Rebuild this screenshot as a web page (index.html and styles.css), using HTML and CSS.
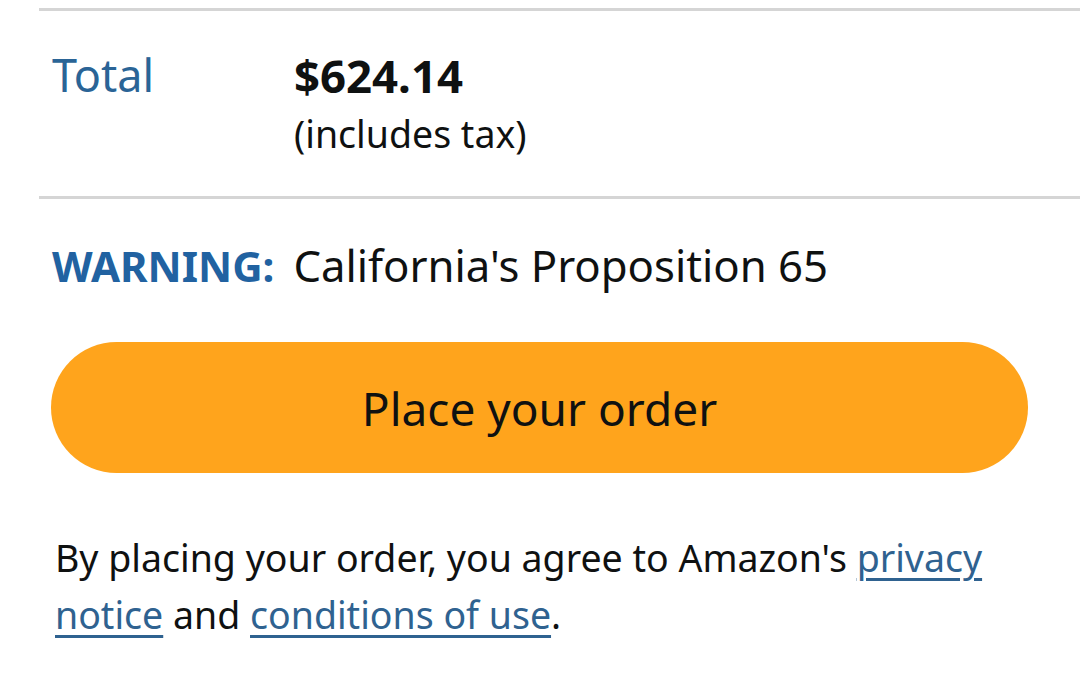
FILE: index.html
```html
<!DOCTYPE html>
<html lang="en">
<head>
<meta charset="utf-8">
<link rel="stylesheet" href="styles.css">
</head>
<body>
<div class="page">
  <div class="divider"></div>
  <div class="total-row">
    <div class="total-label">Total</div>
    <div class="total-value">
      <div class="price">$624.14</div>
      <div class="tax">(includes tax)</div>
    </div>
  </div>
  <div class="divider"></div>
  <div class="warning-row">
    <span class="warning-label">WARNING:</span>
    <span class="warning-text">California's Proposition 65</span>
  </div>
  <div class="button-wrap">
    <button class="place-order">Place your order</button>
  </div>
  <p class="agree">By placing your order, you agree to Amazon's <a href="#">privacy notice</a> and <a href="#">conditions of use</a>.</p>
</div>
</body>
</html>
```
FILE: styles.css
```css
html, body {
  margin: 0;
  padding: 0;
  background: #ffffff;
}
body {
  font-family: "Noto Sans", "Open Sans", sans-serif;
  color: #0f1111;
  width: 1080px;
  height: 698px;
  overflow: hidden;
}
.page {
  padding-top: 8px;
}
.divider {
  margin-left: 39px;
  height: 3px;
  background: #d5d5d5;
}
.total-row {
  display: grid;
  grid-template-columns: 242px 1fr;
  padding-left: 52px;
  padding-top: 35px;
  padding-bottom: 32px;
}
.total-label {
  font-size: 45px;
  line-height: 58px;
  color: #2a6496;
}
.price {
  font-size: 45.5px;
  line-height: 58px;
  font-weight: 700;
  color: #0f1111;
}
.tax {
  font-size: 37.5px;
  line-height: 60px;
  color: #0f1111;
}
.warning-row {
  padding-left: 52px;
  padding-top: 34px;
  line-height: 64px;
  display: flex;
  align-items: baseline;
  gap: 19px;
}
.warning-label {
  font-size: 42px;
  font-weight: 700;
  color: #2162a1;
}
.warning-text {
  font-size: 43.7px;
}
.button-wrap {
  padding: 44px 52px 0 51px;
}
.place-order {
  display: block;
  width: 977px;
  height: 131px;
  border: none;
  border-radius: 66px;
  background: #ffa41c;
  font-family: inherit;
  font-size: 46px;
  color: #0f1111;
  padding: 0;
}
.agree {
  margin: 56px 30px 0 55px;
  font-size: 37.5px;
  line-height: 57px;
  color: #0f1111;
}
.agree a {
  color: #2f6290;
  text-decoration: underline;
  text-underline-offset: 6px;
  text-decoration-thickness: 3px;
}
```
